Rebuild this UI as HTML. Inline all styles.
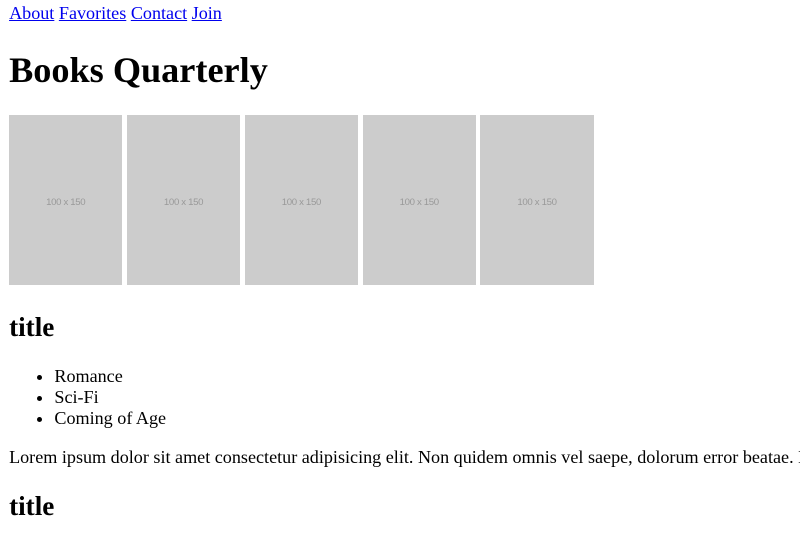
<!DOCTYPE html>
<html><head><meta charset="utf-8"><style>
html{zoom:1.133;overflow:hidden;}
body{margin:3px 8px 8px 8px;font-family:"Liberation Serif",serif;font-size:16px;overflow:hidden;color:#000;background:#fff;width:698px;}
a{color:#00e;}
.ph{display:inline-block;width:100px;height:150px;background:#ccc;vertical-align:baseline;position:relative;}
.ph span{position:absolute;left:0;right:0;top:72px;text-align:center;font-family:"Liberation Sans",sans-serif;font-size:8.5px;color:#999;letter-spacing:-0.3px;}
p{white-space:nowrap;overflow:hidden;margin:13px 0 14px;}
</style></head><body>
<nav><a href="#">About</a> <a href="#">Favorites</a> <a href="#">Contact</a> <a href="#">Join</a></nav>
<h1>Books Quarterly</h1>
<div><div class="ph"><span>100 x 150</span></div> <div class="ph"><span>100 x 150</span></div> <div class="ph"><span>100 x 150</span></div> <div class="ph"><span>100 x 150</span></div> <div class="ph"><span>100 x 150</span></div></div>
<h2>title</h2>
<ul><li>Romance</li><li>Sci-Fi</li><li>Coming of Age</li></ul>
<p>Lorem ipsum dolor sit amet consectetur adipisicing elit. Non quidem omnis vel saepe, dolorum error beatae. Lorem ipsum dolor sit amet.</p>
<h2>title</h2>
</body></html>
